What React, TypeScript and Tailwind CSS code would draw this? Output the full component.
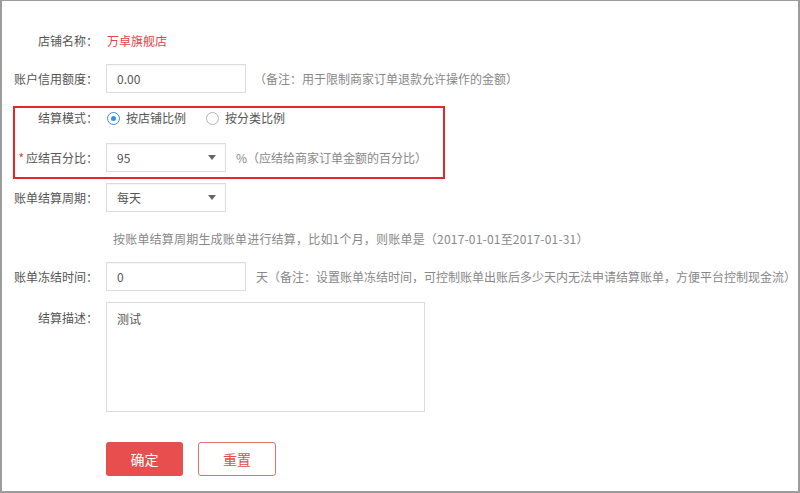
const font = { fontFamily: '"Noto Sans CJK SC", "Microsoft YaHei", sans-serif' }

function Arrow() {
  return (
    <svg width="8" height="5" viewBox="0 0 8 5" className="shrink-0">
      <path d="M0 0 L8 0 L4 5 Z" fill="#666" />
    </svg>
  )
}

function Radio({ checked, label }: { checked?: boolean; label: string }) {
  return (
    <label className="flex items-center gap-[6px]">
      <span
        className={
          checked
            ? "flex h-[13px] w-[13px] items-center justify-center rounded-full border border-[#3c8dde] bg-white"
            : "flex h-[13px] w-[13px] items-center justify-center rounded-full border border-[#b5b5b5] bg-white"
        }
      >
        {checked && <span className="h-[5px] w-[5px] rounded-full bg-[#3c8dde]" />}
      </span>
      <span>{label}</span>
    </label>
  )
}

function Select({ value }: { value: string }) {
  return (
    <div className="flex h-[29px] w-[120px] items-center justify-between border border-[#dcdcdc] bg-white pl-[10px] pr-[9px] text-[#555] shadow-[inset_0_1px_1px_rgba(0,0,0,0.04)]">
      <span>{value}</span>
      <Arrow />
    </div>
  )
}

function TextInput({ value }: { value: string }) {
  return (
    <div className="flex h-[29px] w-[140px] items-center border border-[#dcdcdc] bg-white px-[10px] text-[#555] shadow-[inset_0_1px_1px_rgba(0,0,0,0.04)]">
      {value}
    </div>
  )
}

export default function App() {
  return (
    <div
      style={font}
      className="box-border h-[493px] w-[800px] overflow-hidden border-t border-r-2 border-b-2 border-l-2 border-[#9c9c9c] bg-white text-[12px] leading-[18px] text-[#555]"
    >
      <div className="flex flex-col pt-[25px]">
        <div className="flex h-[29px] items-center">
          <div className="w-[96px] text-right">店铺名称：</div>
          <div className="ml-[9px] text-[#e0444a]">万卓旗舰店</div>
        </div>

        <div className="mt-[9px] flex h-[29px] items-center">
          <div className="w-[96px] text-right">账户信用额度：</div>
          <div className="ml-[8px]">
            <TextInput value="0.00" />
          </div>
          <div className="ml-[8px] text-[#888]">（备注：用于限制商家订单退款允许操作的金额）</div>
        </div>

        <div className="mt-[13px] ml-[11px] w-[432px] border-2 border-[#e8262a] pb-[5px]">
          <div className="flex h-[20px] items-center">
            <div className="w-[83px] text-right">结算模式：</div>
            <div className="ml-[9px] flex items-center gap-[20px]">
              <Radio checked label="按店铺比例" />
              <Radio label="按分类比例" />
            </div>
          </div>
          <div className="mt-[15px] flex h-[29px] items-center">
            <div className="w-[83px] text-right">
              <span className="mr-[2px] text-[#e4393c]">*</span>应结百分比：
            </div>
            <div className="ml-[8px]">
              <Select value="95" />
            </div>
            <div className="ml-[10px] text-[#888]">%（应结给商家订单金额的百分比）</div>
          </div>
        </div>

        <div className="mt-[4px] flex h-[29px] items-center">
          <div className="w-[96px] text-right">账单结算周期：</div>
          <div className="ml-[8px]">
            <Select value="每天" />
          </div>
        </div>

        <div className="mt-[17px] flex h-[20px] items-center pl-[111px] tracking-[0.2px] text-[#888]">
          按账单结算周期生成账单进行结算，比如1个月，则账单是（2017-01-01至2017-01-31）
        </div>

        <div className="mt-[13px] flex h-[29px] items-center">
          <div className="w-[96px] text-right">账单冻结时间：</div>
          <div className="ml-[8px]">
            <TextInput value="0" />
          </div>
          <div className="ml-[10px] text-[#888]">
            天（备注：设置账单冻结时间，可控制账单出账后多少天内无法申请结算账单，方便平台控制现金流）
          </div>
        </div>

        <div className="mt-[11px] flex">
          <div className="w-[96px] pt-[7px] text-right">结算描述：</div>
          <div className="ml-[8px] h-[110px] w-[319px] border border-[#dcdcdc] bg-white px-[10px] pt-[7px] text-[#555]">
            测试
          </div>
        </div>

        <div className="mt-[30px] flex gap-[15px] pl-[104px]">
          <button className="h-[34px] w-[77px] rounded-[3px] bg-[#e84e4e] text-[14px] text-white">确定</button>
          <button className="h-[34px] w-[78px] rounded-[3px] border border-[#e07070] bg-white text-[14px] text-[#e05050]">
            重置
          </button>
        </div>
      </div>
    </div>
  )
}
